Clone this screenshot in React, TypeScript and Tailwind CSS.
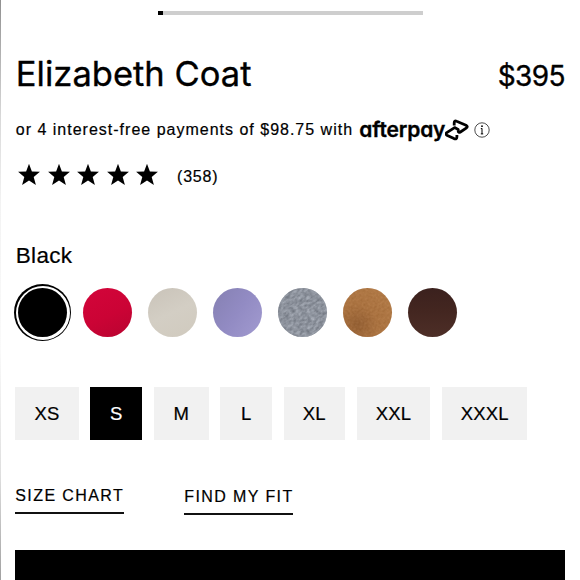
import React from "react";

const sans = "font-['Liberation_Sans',Arial,sans-serif]";

const swatches = [
  { name: "Black", fill: "bg-black", texture: null },
  { name: "Red", fill: "bg-[linear-gradient(155deg,#d3053a_0%,#cb0335_55%,#b80430_100%)]", texture: null },
  { name: "Ivory", fill: "bg-[linear-gradient(155deg,#c9c3b9_0%,#d3cec4_50%,#d0cabe_100%)]", texture: null },
  { name: "Lilac", fill: "bg-[linear-gradient(125deg,#8580b2_0%,#928bc3_50%,#a29bd0_100%)]", texture: null },
  { name: "Grey", fill: "bg-[#8e949e]", texture: "grey" },
  { name: "Camel", fill: "bg-[radial-gradient(circle_at_30%_75%,#8f5c30_0%,#a9723f_40%,#b37d48_100%)]", texture: "camel" },
  { name: "Brown", fill: "bg-[linear-gradient(180deg,#3b211e_0%,#432620_45%,#4d2e27_100%)]", texture: null },
];

const sizes = [
  { label: "XS", width: "w-[63.3px]" },
  { label: "S", width: "w-[51.8px]" },
  { label: "M", width: "w-[54.5px]" },
  { label: "L", width: "w-[51.5px]" },
  { label: "XL", width: "w-[61px]" },
  { label: "XXL", width: "w-[73.7px]" },
  { label: "XXXL", width: "w-[85px]" },
];

function Fabric({ kind }: { kind: string }) {
  const grey = kind === "grey";
  return (
    <svg className="block size-full" viewBox="0 0 49 49" aria-hidden="true">
      <filter id={kind} x="0" y="0" width="100%" height="100%" colorInterpolationFilters="sRGB">
        <feTurbulence type="fractalNoise" baseFrequency={grey ? "0.25 0.4" : "0.5"} numOctaves="3" seed="8" />
        <feColorMatrix
          values={
            grey
              ? "0.7 0 0 0 0.2 0.7 0 0 0 0.22 0.7 0 0 0 0.26 0 0 0 0 0.5"
              : "0.8 0 0 0 0.3 0.8 0 0 0 0.07 0.8 0 0 0 -0.1 0 0 0 0 0.15"
          }
        />
      </filter>
      <g transform="rotate(-35 24.5 24.5)">
        <rect x="-12" y="-12" width="73" height="73" filter={`url(#${kind})`} />
      </g>
    </svg>
  );
}

function Star() {
  return (
    <svg className="h-[21px] w-[22px]" viewBox="0 0 22 21" aria-hidden="true">
      <path d="M11 -.2l2.9 7.7 8 .3-6.2 5.1 2.2 8L11 16.4l-6.9 4.5 2.2-8L.1 7.8l8-.3z" />
    </svg>
  );
}

export default function App() {
  return (
    <main className={`flex h-[580px] w-[580px] overflow-hidden bg-white text-black [-webkit-text-stroke:0.2px] ${sans}`}>
      <div className="w-px shrink-0 bg-[linear-gradient(180deg,#909090_0%,#d8d8d8_20%,#f3f3f3_35%,#fafafa_60%,#dedede_82%,#a0a0a0_100%)]" />
      <div className="flex w-[579px] flex-col pl-[14.3px] pr-[15px]">
        <div className="ml-[142.7px] mt-[11px] h-[4px] w-[265px] shrink-0 bg-[#cecece]">
          <div className="h-full w-[5px] bg-black" />
        </div>

        <div className="mt-[35px] flex h-12 shrink-0 items-baseline justify-between whitespace-nowrap font-['Inter',sans-serif] [-webkit-text-stroke:0.35px]">
          <h1 className="ml-[0.5px] text-[34.5px] leading-[48px] tracking-[0.02px]">Elizabeth Coat</h1>
          <span className="text-[28px] leading-[48px] tracking-[-0.6px]">$395</span>
        </div>

        <div className="mt-[15.5px] flex h-8 shrink-0 items-center whitespace-nowrap">
          <p className="w-[344px] shrink-0 pl-[0.5px] text-[16px] tracking-[1px]">
            or 4 interest-free payments of $98.75 with
          </p>
          <span className="w-[86px] shrink-0 font-['Inter',sans-serif] text-[21px] font-semibold leading-6 tracking-[-0.15px] [-webkit-text-stroke:0.35px] [font-feature-settings:'cv11']">
            afterpay
          </span>
          <svg className="h-[22px] w-6 shrink-0" viewBox="0 0 24 22" fill="none" stroke="black" strokeWidth="2.8" strokeLinejoin="round" aria-hidden="true">
            <path d="M9.2 6.6V4Q9.2 1.2 11.6 2.3L21 6.2Q23.4 7.6 21.2 9.1L15.4 13Q13.4 14.2 13.2 12V10.5L9.6 8.6L1.8 13.6Q.2 15 1.8 16.2L9 19.6Q11.9 20.6 11.9 18V16" />
          </svg>
          <svg className="ml-[5px] size-4 shrink-0" viewBox="0 0 16 16" fill="none" stroke="black" aria-hidden="true">
            <circle cx="8" cy="8" r="7.2" strokeWidth=".7" />
            <path d="M8 6.3v5.7M6.8 6.6h1.2M6.8 11.9h2.4" strokeWidth="1" />
            <circle cx="8" cy="4.2" r=".9" fill="black" stroke="none" />
          </svg>
        </div>

        <div className="mt-[15.5px] flex h-8 shrink-0 items-center pl-[2.7px]">
          <div className="-mt-[5px] flex gap-[7.6px]">
            <Star />
            <Star />
            <Star />
            <Star />
            <Star />
          </div>
          <span className="ml-[18.7px] text-[16px] tracking-[0.8px]">(358)</span>
        </div>

        <p className="mt-[47px] h-8 shrink-0 pl-[0.5px] text-[22.5px] leading-8 tracking-[0.3px]">Black</p>

        <div className="mt-[12px] flex h-[57px] shrink-0 items-center gap-4">
          {swatches.map((s, i) => (
            <button key={s.name} aria-label={s.name} className={i === 0 ? "-ml-[1.3px] -mr-[4.5px] flex size-[57px] shrink-0 items-center justify-center rounded-full bg-black p-[1.5px]" : "size-[49px] shrink-0"}>
              {i === 0 ? (
                <span className="flex size-[54px] shrink-0 items-center justify-center rounded-full bg-white">
                  <span className="block size-[48.5px] shrink-0 rounded-full bg-black" />
                </span>
              ) : (
                <span className={`block size-[49px] shrink-0 overflow-hidden rounded-full ${s.fill}`}>
                  {s.texture && <Fabric kind={s.texture} />}
                </span>
              )}
            </button>
          ))}
        </div>

        <div className="mt-[46px] flex h-[53px] shrink-0 gap-[11.87px]">
          {sizes.map((s) => (
            <button key={s.label} className={`shrink-0 pt-px text-[18.5px] tracking-[0.2px] ${s.width} ${s.label === "S" ? "bg-black text-white" : "bg-[#f1f1f1] text-black"}`}>
              {s.label}
            </button>
          ))}
        </div>

        <div className="mt-[46px] flex h-16 shrink-0 items-start gap-[60px] whitespace-nowrap text-[16px] tracking-[1.4px]">
          <a className="h-[27.5px] w-[109px] border-b-2 border-[#111] leading-5">SIZE CHART</a>
          <a className="mt-px h-[27.5px] w-[109px] border-b-2 border-[#111] leading-5">FIND MY FIT</a>
        </div>

        <div className="h-[32px] shrink-0 bg-black" />
      </div>
    </main>
  );
}
